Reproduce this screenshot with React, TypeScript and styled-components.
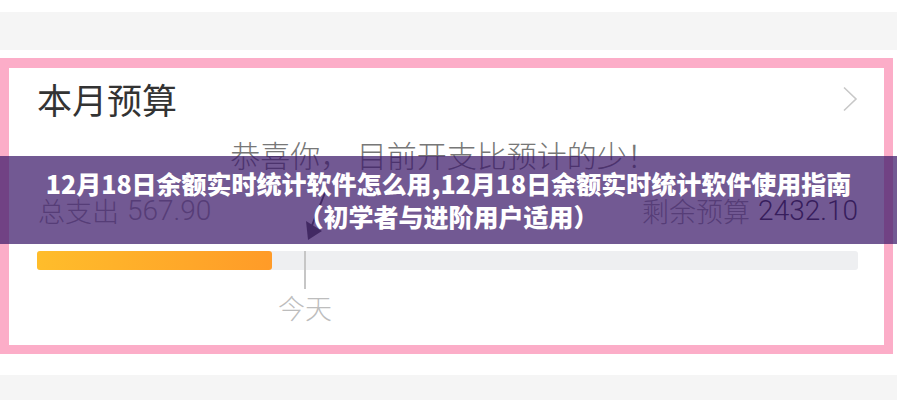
import styled, { createGlobalStyle } from 'styled-components'

const GlobalStyle = createGlobalStyle`
  html, body {
    margin: 0;
    padding: 0;
    background: #ffffff;
  }
  body {
    font-family: "Noto Sans CJK SC", "Noto Sans", sans-serif;
  }
`

const SPage = styled.div`
  position: relative;
  width: 897px;
  height: 400px;
  overflow: hidden;
  background: #ffffff;
  display: flex;
  flex-direction: column;
  padding-top: 12px;
  box-sizing: border-box;
`

interface IBand {
  h: number
}

const SGreyBand = styled.div<IBand>`
  height: ${p => p.h}px;
  background: #f5f5f5;
  flex-shrink: 0;
`

const SGap = styled.div`
  height: 21px;
  flex-shrink: 0;
`

const SFrame = styled.div`
  margin-top: 8px;
  width: 893px;
  height: 296px;
  box-sizing: border-box;
  border: 9px solid #fcadc8;
  border-top-width: 10px;
  background: #ffffff;
  display: flex;
  flex-direction: column;
  padding: 11px 26px 0 28px;
  flex-shrink: 0;
`

const SHeadRow = styled.div`
  display: flex;
  align-items: center;
  justify-content: space-between;
  height: 40px;
`

const STitle = styled.h2`
  margin: 0;
  font-size: 35px;
  line-height: 40px;
  font-weight: 400;
  color: #333333;
`

const SChevron = styled.svg`
  width: 16px;
  height: 26px;
`

const SCongrats = styled.p`
  margin: 18px 0 0 0;
  text-align: center;
  font-size: 30px;
  line-height: 34px;
  font-weight: 300;
  color: #777777;
  padding-right: 8px;
`

const SStatRow = styled.div`
  margin-top: 24px;
  display: flex;
  justify-content: space-between;
  align-items: baseline;
  padding: 0 0 0 1px;
  height: 32px;
`

const SStat = styled.div`
  font-size: 27px;
  line-height: 32px;
  font-weight: 300;
  color: #999999;
  display: flex;
  gap: 8px;
`

interface INum {
  dark?: boolean
}

const SNum = styled.span<INum>`
  font-family: Roboto, "Noto Sans", sans-serif;
  font-weight: 300;
  font-size: 28px;
  color: ${p => (p.dark ? '#2e2e3a' : '#9a9a9a')};
`

const SProgress = styled.div`
  position: relative;
  margin-top: 24px;
  height: 19px;
  border-radius: 3px;
  background: #eeeff1;
`

interface IFill {
  pct: number
}

const SFill = styled.div<IFill>`
  height: 100%;
  width: ${p => p.pct}%;
  border-radius: 3px;
  background: linear-gradient(90deg, #ffbd2b, #ff9b28);
`

const SToday = styled.div`
  position: absolute;
  top: 0;
  left: 241px;
  width: 54px;
  display: flex;
  flex-direction: column;
  align-items: center;
`

const STick = styled.div`
  width: 2px;
  height: 38px;
  background: #c6c6c6;
`

const STodayLabel = styled.span`
  margin-top: 4px;
  font-size: 27px;
  line-height: 30px;
  font-weight: 300;
  color: #bdbdbd;
`

const SArrow = styled.svg`
  position: absolute;
  left: 300px;
  top: 188px;
  width: 32px;
  height: 56px;
`

const SBanner = styled.div`
  position: absolute;
  left: 0;
  top: 156px;
  width: 897px;
  height: 88px;
  background: rgba(60, 25, 105, 0.72);
  display: flex;
  flex-direction: column;
  align-items: center;
  justify-content: center;
`

const SBannerText = styled.div`
  color: #ffffff;
  font-weight: 900;
  font-size: 25px;
  line-height: 33px;
  text-align: center;
`

const App = () => {
  return (
    <>
      <GlobalStyle />
      <SPage>
        <SGreyBand h={38} />
        <SFrame>
          <SHeadRow>
            <STitle>本月预算</STitle>
            <SChevron viewBox="0 0 16 26">
              <path d="M2 1.5 L14 13 L2 24.5" fill="none" stroke="#c8c8c8" strokeWidth="1.6" />
            </SChevron>
          </SHeadRow>
          <SCongrats>恭喜你， 目前开支比预计的少！</SCongrats>
          <SStatRow>
            <SStat>
              总支出<SNum>567.90</SNum>
            </SStat>
            <SStat>
              剩余预算<SNum dark>2432.10</SNum>
            </SStat>
          </SStatRow>
          <SProgress>
            <SFill pct={28.6} />
            <SToday>
              <STick />
              <STodayLabel>今天</STodayLabel>
            </SToday>
          </SProgress>
        </SFrame>
        <SGap />
        <SGreyBand h={30} />
        <SArrow viewBox="0 0 32 56">
          <path d="M26 2 L11 40" stroke="#555555" strokeWidth="2" fill="none" />
          <path d="M6 33 L8 52 L22 43 Z" fill="#555555" />
        </SArrow>
        <SBanner>
          <SBannerText>12月18日余额实时统计软件怎么用,12月18日余额实时统计软件使用指南</SBannerText>
          <SBannerText>（初学者与进阶用户适用）</SBannerText>
        </SBanner>
      </SPage>
    </>
  )
}

export default App
